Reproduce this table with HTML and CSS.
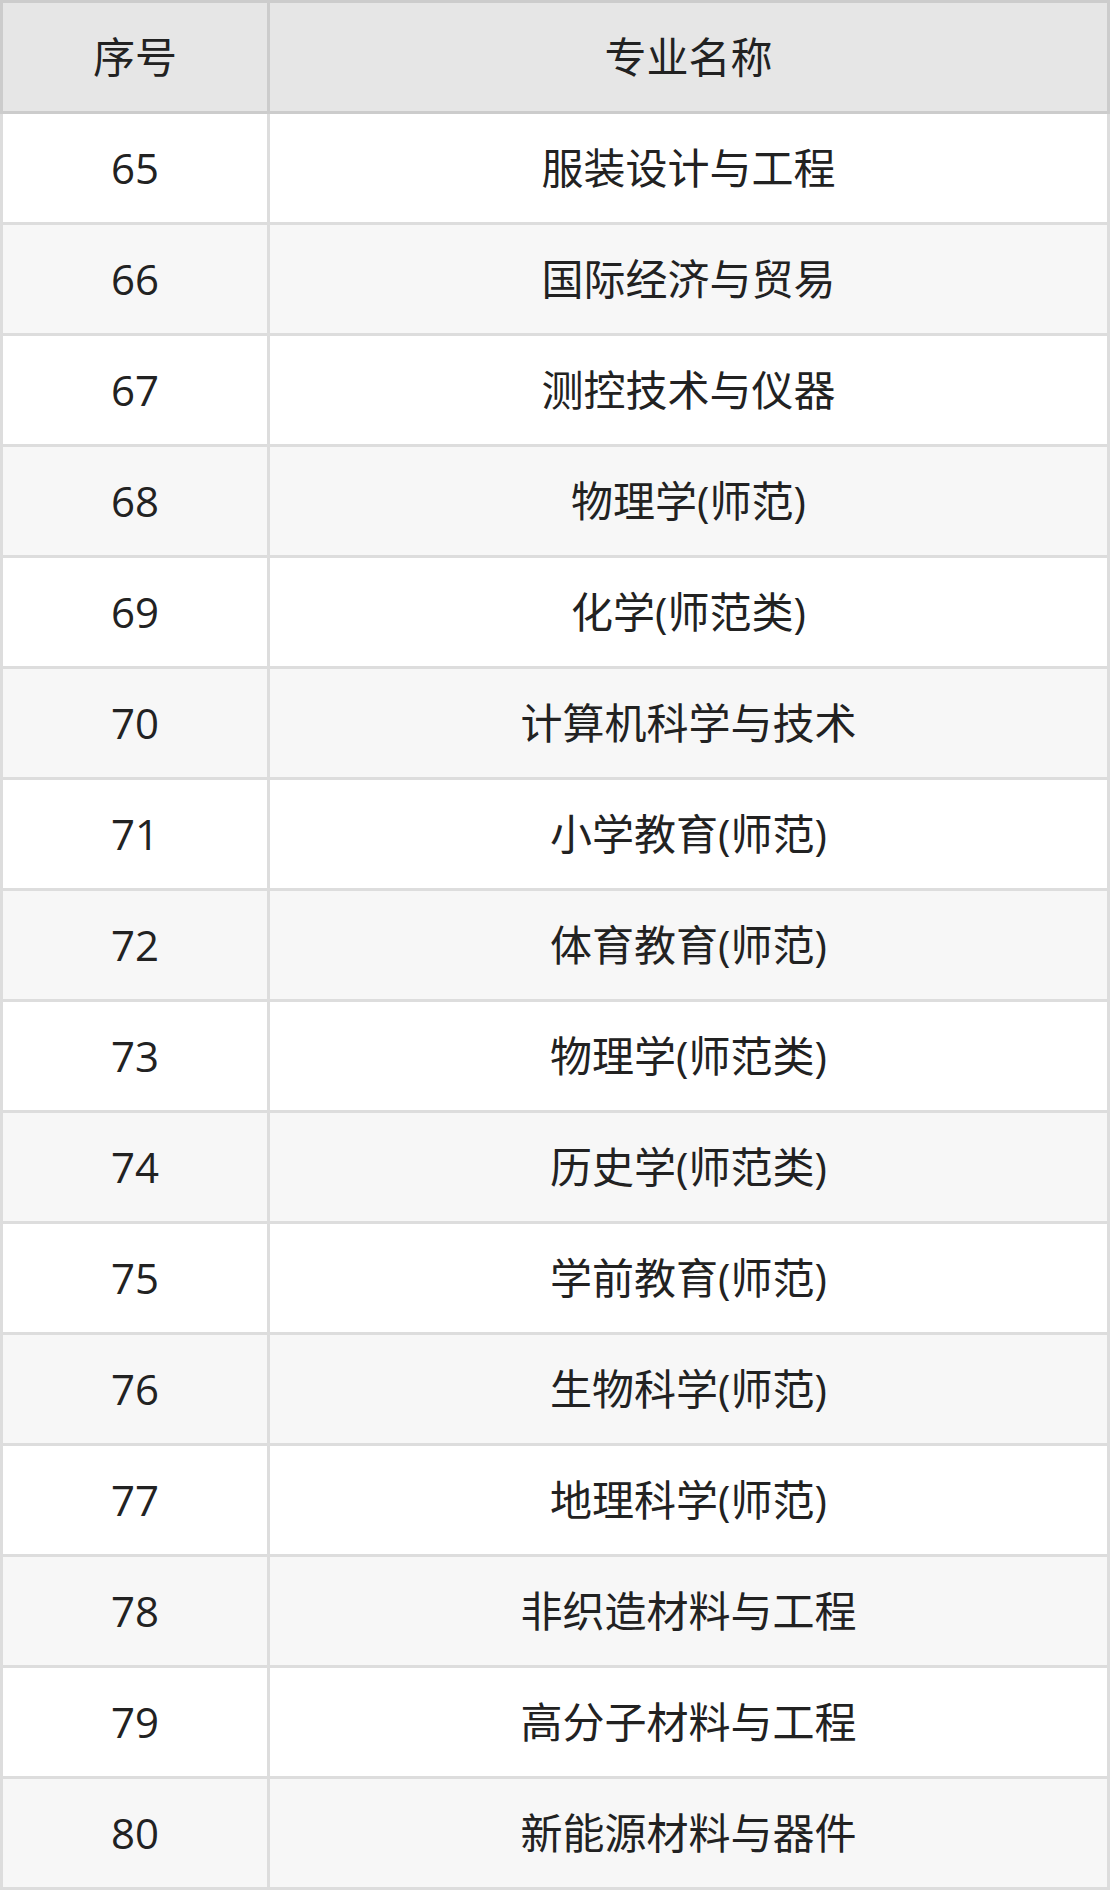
FILE: index.html
```html
<!DOCTYPE html>
<html lang="zh-CN">
<head>
<meta charset="utf-8">
<title>专业列表</title>
<link rel="stylesheet" href="styles.css">
</head>
<body>
<table class="majors">
  <thead>
    <tr><th class="c-no">序号</th><th class="c-name">专业名称</th></tr>
  </thead>
  <tbody>
    <tr><td class="c-no">65</td><td class="c-name">服装设计与工程</td></tr>
    <tr><td class="c-no">66</td><td class="c-name">国际经济与贸易</td></tr>
    <tr><td class="c-no">67</td><td class="c-name">测控技术与仪器</td></tr>
    <tr><td class="c-no">68</td><td class="c-name">物理学(师范)</td></tr>
    <tr><td class="c-no">69</td><td class="c-name">化学(师范类)</td></tr>
    <tr><td class="c-no">70</td><td class="c-name">计算机科学与技术</td></tr>
    <tr><td class="c-no">71</td><td class="c-name">小学教育(师范)</td></tr>
    <tr><td class="c-no">72</td><td class="c-name">体育教育(师范)</td></tr>
    <tr><td class="c-no">73</td><td class="c-name">物理学(师范类)</td></tr>
    <tr><td class="c-no">74</td><td class="c-name">历史学(师范类)</td></tr>
    <tr><td class="c-no">75</td><td class="c-name">学前教育(师范)</td></tr>
    <tr><td class="c-no">76</td><td class="c-name">生物科学(师范)</td></tr>
    <tr><td class="c-no">77</td><td class="c-name">地理科学(师范)</td></tr>
    <tr><td class="c-no">78</td><td class="c-name">非织造材料与工程</td></tr>
    <tr><td class="c-no">79</td><td class="c-name">高分子材料与工程</td></tr>
    <tr><td class="c-no">80</td><td class="c-name">新能源材料与器件</td></tr>
  </tbody>
</table>
</body>
</html>
```

FILE: styles.css
```css
* { box-sizing: border-box; }
html, body { margin: 0; padding: 0; background: #ffffff; }
body {
  font-family: "Open Sans", "Noto Sans CJK SC", sans-serif;
  color: #222222;
}
.majors {
  width: 1110px;
  table-layout: fixed;
  border-collapse: separate;
  border-spacing: 0;
}
.majors th, .majors td {
  padding: 0;
  text-align: center;
  vertical-align: middle;
  font-size: 42px;
  font-weight: 400;
  line-height: 1.2;
}
.majors th {
  height: 114px;
  background: #e6e6e6;
  border-top: 3px solid #cccccc;
  border-right: 3px solid #cccccc;
  border-bottom: 3px solid #cccccc;
}
.majors th.c-no { border-left: 3px solid #cccccc; width: 270px; }
.majors td {
  height: 111px;
  border-right: 3px solid #dddddd;
  border-bottom: 3px solid #dddddd;
}
.majors td.c-no { border-left: 3px solid #dddddd; }
.majors tbody tr:nth-child(odd) td { background: #ffffff; }
.majors tbody tr:nth-child(even) td { background: #f7f7f7; }
```
